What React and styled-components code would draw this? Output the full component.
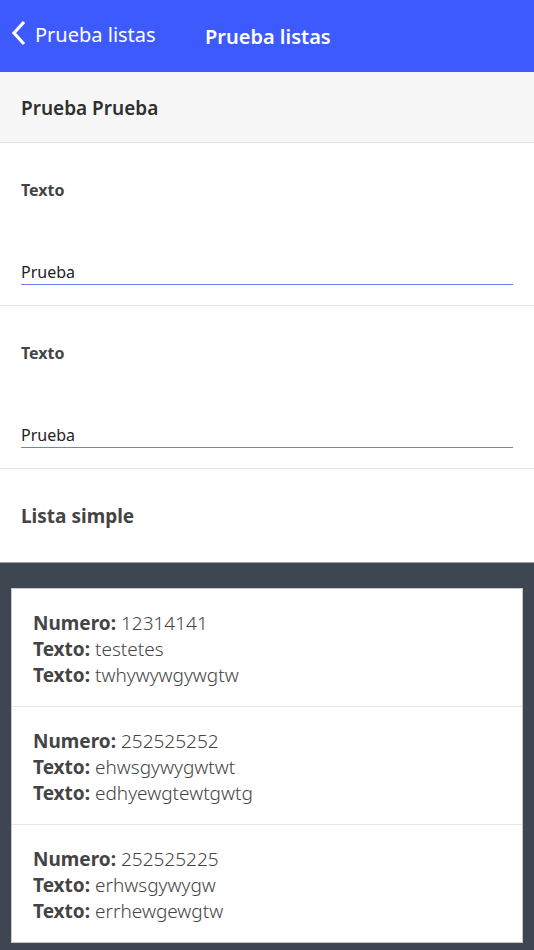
import React from "react";
import styled, { createGlobalStyle } from "styled-components";

const GlobalStyle = createGlobalStyle`
  html, body {
    margin: 0;
    padding: 0;
    background: #3d4651;
  }
  body {
    font-family: "Noto Sans", "Open Sans", sans-serif;
    color: #333;
  }
  * { box-sizing: border-box; }
`;

const items = [
  { numero: "12314141", texto1: "testetes", texto2: "twhywywgywgtw" },
  { numero: "252525252", texto1: "ehwsgywygwtwt", texto2: "edhyewgtewtgwtg" },
  { numero: "252525225", texto1: "erhwsgywygw", texto2: "errhewgewgtw" },
];

const App = () => {
  return (
    <Page>
      <GlobalStyle />
      <NavBar>
        <BackButton>
          <svg width="18" height="26" viewBox="0 0 18 26">
            <path d="M14 2 L4 13 L14 24" fill="none" stroke="#fff" strokeWidth="3.2" />
          </svg>
          <span>Prueba listas</span>
        </BackButton>
        <NavTitle>Prueba listas</NavTitle>
      </NavBar>
      <GroupHeader>Prueba Prueba</GroupHeader>
      <Field>
        <FieldLabel>Texto</FieldLabel>
        <FieldInput defaultValue="Prueba" />
      </Field>
      <Field>
        <FieldLabel>Texto</FieldLabel>
        <FieldInput defaultValue="Prueba" />
      </Field>
      <SectionTitle>Lista simple</SectionTitle>
      <ListArea>
        <Card>
          {items.map((item, i) => (
            <Item key={i}>
              <Line>
                <b>Numero:</b> {item.numero}
              </Line>
              <Line>
                <b>Texto:</b> {item.texto1}
              </Line>
              <Line>
                <b>Texto:</b> {item.texto2}
              </Line>
            </Item>
          ))}
        </Card>
      </ListArea>
    </Page>
  );
};

const Page = styled.div`
  width: 534px;
  min-height: 950px;
  display: flex;
  flex-direction: column;
  background: #3d4651;
`;

const NavBar = styled.div`
  height: 72px;
  background: #3d5afe;
  display: flex;
  align-items: center;
  padding: 0 0 4px 10px;
  color: #fff;
`;

const BackButton = styled.div`
  display: flex;
  align-items: center;
  gap: 7px;
  width: 195px;
  font-size: 20px;
  svg {
    margin-top: -2px;
  }
`;

const NavTitle = styled.div`
  font-size: 20px;
  font-weight: 600;
  margin-top: 4px;
`;

const GroupHeader = styled.div`
  height: 71px;
  background: #f7f7f7;
  border-bottom: 1px solid #e4e4e4;
  display: flex;
  align-items: center;
  padding: 2px 0 0 21px;
  font-size: 19px;
  font-weight: 600;
  color: #2f2f2f;
`;

const Field = styled.div`
  height: 163px;
  background: #fff;
  border-bottom: 1px solid #e4e4e4;
  padding: 36px 21px 0 21px;
  display: flex;
  flex-direction: column;
`;

const FieldLabel = styled.div`
  font-size: 16px;
  font-weight: 700;
  color: #444;
`;

const FieldInput = styled.input`
  margin-top: 59px;
  height: 25px;
  border: none;
  box-shadow: inset 0 -1px 0 #6a7bf5;
  outline: none;
  font-family: inherit;
  font-size: 16px;
  color: #222;
  padding: 0 0 2px 0;
  background: transparent;
`;

const SectionTitle = styled.div`
  height: 94px;
  background: #fff;
  border-bottom: 1px solid #9aa0a6;
  display: flex;
  align-items: center;
  padding-left: 21px;
  font-size: 19px;
  font-weight: 700;
  color: #444;
`;

const ListArea = styled.div`
  flex: 1;
  background: #3d4651;
  padding: 25px 11px 8px 11px;
`;

const Card = styled.div`
  background: #fff;
  border: 1px solid #c8c8c8;
`;

const Item = styled.div`
  height: 118px;
  padding: 21px 21px 0 21px;
  border-bottom: 1px solid #e6e6e6;
  &:last-child {
    border-bottom: none;
    height: 117px;
  }
`;

const Line = styled.div`
  font-size: 19px;
  line-height: 26px;
  color: #444;
  font-weight: 300;
  b {
    font-weight: 700;
  }
`;

export default App;
